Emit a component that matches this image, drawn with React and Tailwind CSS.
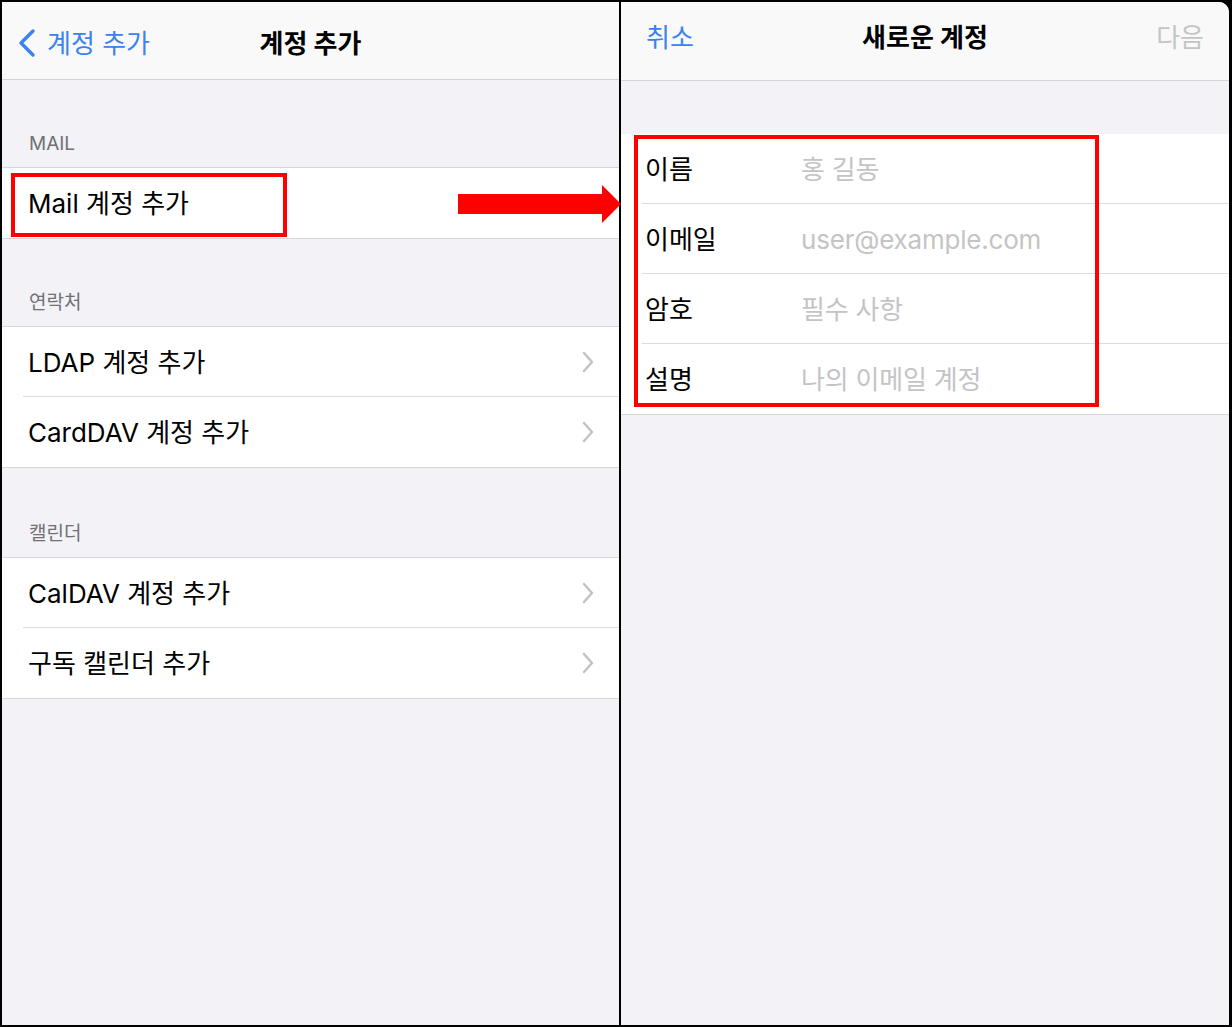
const font = { fontFamily: '"Inter", "Noto Sans CJK KR", sans-serif' };

function Chevron() {
  return (
    <svg width="14" height="22" viewBox="0 0 14 22" className="shrink-0">
      <path d="M3 2 L11 11 L3 20" fill="none" stroke="#c4c4c8" strokeWidth="2.6" strokeLinecap="round" strokeLinejoin="round" />
    </svg>
  );
}

function BackChevron() {
  return (
    <svg width="22" height="30" viewBox="0 0 22 30" className="shrink-0">
      <path d="M17 3 L5 15 L17 27" fill="none" stroke="#3b82f0" strokeWidth="3.4" strokeLinecap="round" strokeLinejoin="round" />
    </svg>
  );
}

function SectionLabel({ children }) {
  return (
    <div className="h-[87px] flex items-end pb-[9px] pl-[27px] text-[19px] text-[#707075]">
      {children}
    </div>
  );
}

function Row({ label, chevron = true, divider = false, children }) {
  return (
    <div className="relative h-[70px] bg-white">
      <div className="h-full flex items-center justify-between pl-[26px] pr-[24px] text-[26px] text-black">
        <span>{label}</span>
        {chevron && <Chevron />}
      </div>
      {divider && <div className="absolute left-[21px] right-0 bottom-0 h-px bg-[#dcdce0]" />}
      {children}
    </div>
  );
}

function Group({ children }) {
  return <div className="border-y border-[#d6d6da] bg-white">{children}</div>;
}

function FieldRow({ label, placeholder, divider }) {
  return (
    <div className="relative h-[70px] flex items-center pl-[24px] text-[26px]">
      <span className="w-[156px] text-black">{label}</span>
      <span className="text-[#c4c4c6] tracking-[-0.2px]">{placeholder}</span>
      {divider && <div className="absolute left-[21px] right-0 bottom-0 h-px bg-[#dcdce0]" />}
    </div>
  );
}

export default function App() {
  return (
    <div style={font} className="relative w-[1232px] h-[1027px] bg-black flex gap-[2px] pl-[2px] pt-[2px] pb-[2px] pr-[3px] overflow-hidden">
      {/* left: 계정 추가 */}
      <div className="w-[617px] h-full bg-[#f2f2f7] flex flex-col">
        <div className="relative h-[78px] bg-[#f9f9fa] border-b border-[#d3d3d8] flex items-center justify-center pt-[5px]">
          <div className="absolute left-[14px] top-[5px] bottom-0 flex items-center gap-[9px] text-[26px] text-[#3b82f0]">
            <BackChevron />
            <span>계정 추가</span>
          </div>
          <span className="text-[26px] font-bold text-black">계정 추가</span>
        </div>

        <SectionLabel>MAIL</SectionLabel>
        <Group>
          <Row label="Mail 계정 추가" chevron={false}>
            <div className="absolute left-[9px] top-[5px] w-[276px] h-[64px] border-[4px] border-[#ff0000]" />
          </Row>
        </Group>

        <SectionLabel>연락처</SectionLabel>
        <Group>
          <Row label="LDAP 계정 추가" divider />
          <Row label="CardDAV 계정 추가" />
        </Group>

        <div className="h-[2px]" />
        <SectionLabel>캘린더</SectionLabel>
        <Group>
          <Row label="CalDAV 계정 추가" divider />
          <Row label="구독 캘린더 추가" />
        </Group>
      </div>

      {/* right: 새로운 계정 */}
      <div className="flex-1 h-full bg-[#f2f2f7] flex flex-col rounded-tr-[10px] overflow-hidden">
        <div className="h-[79px] bg-[#f9f9fa] border-b border-[#d3d3d8] flex items-center justify-between px-[25px] pb-[8px] text-[26px]">
          <span className="text-[#3b82f0]">취소</span>
          <span className="font-bold text-black">새로운 계정</span>
          <span className="text-[#c4c4c6]">다음</span>
        </div>
        <div className="h-[53px]" />
        <div className="relative bg-white border-b border-[#d6d6da]">
          <FieldRow label="이름" placeholder="홍 길동" divider />
          <FieldRow label="이메일" placeholder="user@example.com" divider />
          <FieldRow label="암호" placeholder="필수 사항" divider />
          <FieldRow label="설명" placeholder="나의 이메일 계정" />
          <div className="absolute left-[13px] top-[1px] w-[465px] h-[272px] border-[4px] border-[#ff0000]" />
        </div>
      </div>

      {/* annotation arrow */}
      <svg className="absolute left-[456px] top-[184px]" width="168" height="40" viewBox="0 0 168 40">
        <polygon points="2,10 146,10 146,1 165,20 146,39 146,30 2,30" fill="#ff0000" />
      </svg>
    </div>
  );
}
